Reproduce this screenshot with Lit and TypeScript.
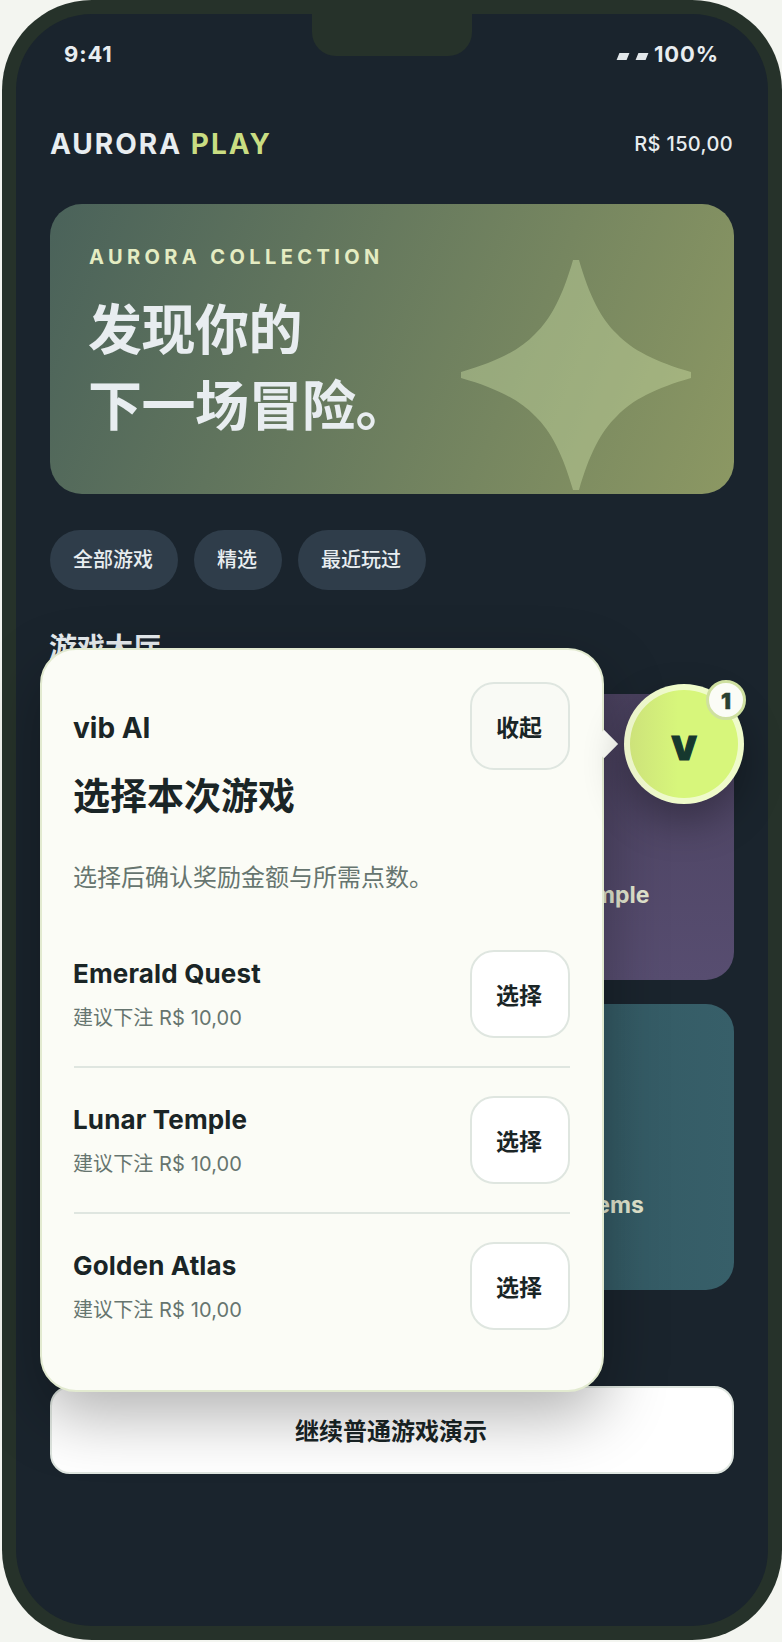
import { LitElement, html, css } from "lit";
import { customElement } from "lit/decorators.js";

const GAMES = ["Emerald Quest", "Lunar Temple", "Golden Atlas"];
const CARDS = [
  { name: "", tone: "green" },
  { name: "Lunar Temple", tone: "violet" },
  { name: "", tone: "gold" },
  { name: "Mystic Gems", tone: "teal" },
];

@customElement("app-root")
export class AppRoot extends LitElement {
  static styles = css`
    :host {
      display: block;
      width: 782px;
      height: 1642px;
      overflow: hidden;
      background: #f3f5f0;
      font-family: Inter, "Noto Sans CJK SC", sans-serif;
    }
    * { box-sizing: border-box; }
    .frame {
      position: relative;
      width: 780px;
      height: 1640px;
      margin-left: 2px;
      background: #26322a;
      border-radius: 90px;
      padding: 14px;
    }
    .notch {
      position: absolute;
      left: 310px;
      top: 14px;
      width: 160px;
      height: 42px;
      background: #26322a;
      border-radius: 0 0 24px 24px;
      z-index: 2;
    }
    .screen {
      height: 1612px;
      background: #1a242d;
      border-radius: 76px;
      padding: 26px 34px 0;
      color: #e8edf0;
      overflow: hidden;
    }
    .status {
      display: flex;
      justify-content: space-between;
      align-items: center;
      height: 28px;
      padding: 0 15px 0 14px;
      font-size: 22px;
      font-weight: 700;
      letter-spacing: 0.9px;
    }
    .battery { display: flex; align-items: center; gap: 7px; }
    .bars { display: flex; gap: 9px; margin-top: 5px; }
    .bars i {
      display: block;
      width: 10px;
      height: 7px;
      background: #e2e7ea;
      transform: skewX(-22deg);
    }
    .top {
      display: flex;
      justify-content: space-between;
      align-items: center;
      height: 40px;
      margin-top: 56px;
    }
    .logo { font-size: 28px; font-weight: 700; letter-spacing: 2px; }
    .logo span { color: #c9dd82; }
    .wallet { font-size: 20px; font-weight: 500; letter-spacing: 0.35px; margin-right: 1px; }
    .hero {
      position: relative;
      height: 290px;
      margin-top: 40px;
      padding: 41px 39px 0;
      border-radius: 32px;
      overflow: hidden;
      background: linear-gradient(112deg, #4a625a, #8c9863);
    }
    .eyebrow {
      font-size: 20px;
      line-height: 24px;
      font-weight: 700;
      letter-spacing: 4.4px;
      color: #e4ecc2;
    }
    .hero h1 {
      margin: 24px 0 0 -1px;
      font-size: 54px;
      line-height: 76px;
      font-weight: 700;
      letter-spacing: -0.5px;
    }
    .star { position: absolute; left: 411px; top: 56px; width: 230px; height: 230px; }
    .chips { display: flex; gap: 16px; margin-top: 36px; }
    .chip {
      height: 60px;
      padding: 0 25px 0 23px;
      border-radius: 30px;
      background: #2f3d4a;
      font-size: 20px;
      font-weight: 500;
      line-height: 60px;
    }
    h2 { margin: 38px 0 0 -1px; font-size: 28px; line-height: 40px; font-weight: 700; }
    .grid {
      display: grid;
      grid-template-columns: 1fr 1fr;
      gap: 24px;
      margin-top: 26px;
    }
    .card {
      height: 286px;
      border-radius: 28px;
      padding: 0 0 70px 93px;
      display: flex;
      align-items: flex-end;
      font-size: 23px;
      line-height: 30px;
      font-weight: 700;
      color: #e2e6cf;
    }
    .green { background: #3d5a4c; }
    .gold { background: #5f5a3c; }
    .violet { background: linear-gradient(180deg, #4b4260, #574d70); }
    .teal { background: linear-gradient(90deg, #2f545e, #375f69); }
    .continue {
      display: block;
      width: 100%;
      height: 88px;
      margin-top: 96px;
      padding: 0 2px 2px 0;
      background: #fff;
      border: 2px solid #dfe6e0;
      border-radius: 20px;
      color: #1a2526;
      font: 700 24px Inter, "Noto Sans CJK SC", sans-serif;
    }
    .panel {
      position: absolute;
      left: 38px;
      top: 648px;
      width: 564px;
      height: 744px;
      padding: 32px;
      background: #fbfcf6;
      border: 2px solid #e2ead0;
      border-radius: 36px;
      box-shadow: 0 24px 64px rgba(0, 0, 0, 0.3);
      color: #1a2526;
      z-index: 3;
    }
    .arrow {
      position: absolute;
      right: -12px;
      top: 84px;
      width: 20px;
      height: 20px;
      background: #fbfcf6;
      transform: rotate(45deg);
    }
    .head { display: flex; justify-content: space-between; align-items: center; }
    .brand { font-size: 28px; font-weight: 700; margin: 4px 0 0 -1px; }
    .btn {
      width: 100px;
      height: 88px;
      flex: none;
      padding: 0 2px 0 0;
      border: 2px solid #dfe6e0;
      border-radius: 24px;
      background: #fff;
      color: #1a2526;
      font: 600 23px Inter, "Noto Sans CJK SC", sans-serif;
    }
    .btn.ghost { background: #f9faf5; }
    .panel h3 {
      margin: 3px 0 0 -1px;
      font-size: 37px;
      line-height: 48px;
      font-weight: 700;
    }
    .desc { margin: 39px 0 0 -1px; font-size: 24px; line-height: 36px; color: #66756f; white-space: nowrap; }
    .list { margin-top: 26px; }
    .row {
      display: flex;
      justify-content: space-between;
      align-items: center;
      padding: 28px 0;
      border-bottom: 2px solid #dfe6e0;
    }
    .row:last-child { border-bottom: 0; }
    .info { margin-left: -1px; }
    .name { font-size: 26px; line-height: 34px; font-weight: 700; letter-spacing: 0.15px; }
    .sub { margin-top: 14px; font-size: 20px; line-height: 26px; color: #66756f; letter-spacing: 0.1px; }
    .fab {
      position: absolute;
      left: 622px;
      top: 684px;
      width: 120px;
      height: 120px;
      padding-top: 8px;
      border-radius: 50%;
      border: 6px solid rgba(255, 255, 255, 0.6);
      background: linear-gradient(90deg, #cce07a, #d7f67b 45%) border-box;
      box-shadow: 0 18px 40px rgba(0, 0, 0, 0.3);
      display: flex;
      align-items: center;
      justify-content: center;
      color: #16382e;
      font-size: 33px;
      font-weight: 900;
      -webkit-text-stroke: 1.2px #16382e;
      z-index: 4;
    }
    .badge {
      position: absolute;
      right: -8px;
      top: -10px;
      width: 40px;
      height: 40px;
      padding-top: 2px;
      border-radius: 50%;
      border: 3px solid #cfe0a0;
      background: #fbfcf6;
      color: #2a4030;
      font-size: 22px;
      font-weight: 900;
      -webkit-text-stroke: 0.4px #2a4030;
      display: flex;
      align-items: center;
      justify-content: center;
    }
  `;

  render() {
    return html`
      <div class="frame">
        <div class="notch"></div>
        <div class="screen">
          <div class="status">
            <span>9:41</span>
            <span class="battery"><span class="bars"><i></i><i></i></span>100%</span>
          </div>
          <div class="top">
            <div class="logo">AURORA <span>PLAY</span></div>
            <div class="wallet">R$ 150,00</div>
          </div>
          <section class="hero">
            <div class="eyebrow">AURORA COLLECTION</div>
            <h1>发现你的<br />下一场冒险。</h1>
            <svg class="star" viewBox="-115 -115 230 230" aria-hidden="true">
              <path
                fill="rgb(220,240,180)"
                fill-opacity="0.35"
                d="M-3-115H3C13-80 25-56 41-41C56-25 80-13 115-3V3C80 13 56 25 41 41C25 56 13 80 3 115H-3C-13 80-25 56-41 41C-56 25-80 13-115 3V-3C-80-13-56-25-41-41C-25-56-13-80-3-115Z"
              />
            </svg>
          </section>
          <div class="chips">
            <div class="chip">全部游戏</div>
            <div class="chip">精选</div>
            <div class="chip">最近玩过</div>
          </div>
          <h2>游戏大厅</h2>
          <div class="grid">
            ${CARDS.map((c) => html`<div class="card ${c.tone}">${c.name}</div>`)}
          </div>
          <button class="continue">继续普通游戏演示</button>
        </div>
        <aside class="panel">
          <div class="arrow"></div>
          <div class="head">
            <div class="brand">vib AI</div>
            <button class="btn ghost">收起</button>
          </div>
          <h3>选择本次游戏</h3>
          <p class="desc">选择后确认奖励金额与所需点数。</p>
          <div class="list">
            ${GAMES.map(
              (g) => html`<div class="row">
                <div class="info">
                  <div class="name">${g}</div>
                  <div class="sub">建议下注 R$ 10,00</div>
                </div>
                <button class="btn">选择</button>
              </div>`
            )}
          </div>
        </aside>
        <div class="fab">V<span class="badge">1</span></div>
      </div>
    `;
  }
}
